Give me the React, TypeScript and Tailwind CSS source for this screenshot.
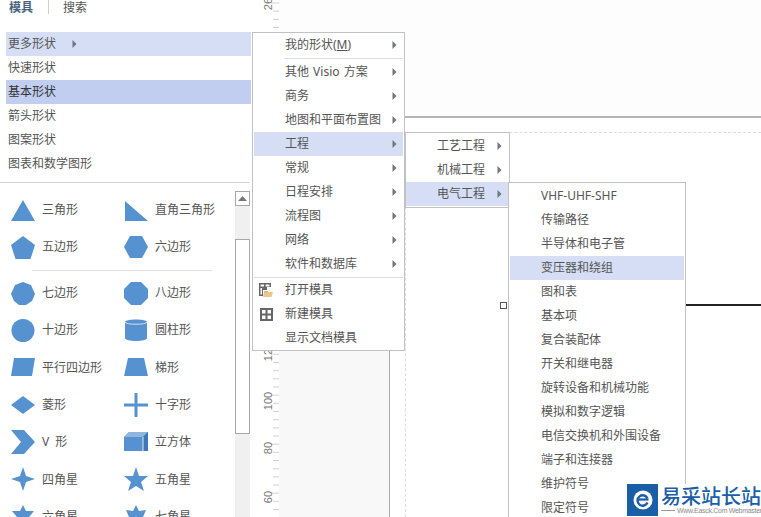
import React from "react";

const font = { fontFamily: '"Noto Sans", "Noto Sans CJK SC", "Liberation Sans", sans-serif' };

function Arrow({ className = "" }: { className?: string }) {
  return (
    <svg width="5" height="8" viewBox="0 0 5 8" className={className}>
      <path d="M0.5 0 L4.5 4 L0.5 8 Z" fill="#6f7680" />
    </svg>
  );
}

const B = "#5592cf";
const shapes: Record<string, React.ReactNode> = {
  tri: <polygon points="12,2 24,23 0,23" fill={B} />,
  rtri: <polygon points="1,3 24,23 1,23" fill={B} />,
  pent: <polygon points="12,1 24,10 19.5,24 4.5,24 0,10" fill={B} />,
  hex: <polygon points="6,1 18,1 24,12 18,23 6,23 0,12" fill={B} />,
  hept: <polygon points="12,1 20,4 24,13 21,20 15,24 8,24 3,20 0,13 4,4" fill={B} />,
  oct: <polygon points="7,1 17,1 24,8 24,17 17,24 7,24 0,17 0,8" fill={B} />,
  dec: <circle cx="12" cy="12.5" r="11.5" fill={B} />,
  cyl: (
    <g>
      <path d="M1 4 C1 0.5 23 0.5 23 4 V20 C23 24 1 24 1 20 Z" fill={B} />
      <path d="M1 4 C1 7 23 7 23 4" fill="none" stroke="#cfe0f2" strokeWidth="1" />
    </g>
  ),
  para: <polygon points="3,3 24,3 21,21 0,21" fill={B} />,
  trap: <polygon points="4,3 20,3 24,21 0,21" fill={B} />,
  dia: <polygon points="12,3 24,12 12,21 0,12" fill={B} />,
  cross: <path d="M10.5 0 H13.5 V10.5 H24 V13.5 H13.5 V24 H10.5 V13.5 H0 V10.5 H10.5 Z" fill={B} />,
  chev: <polygon points="0,0 13,0 24,12 13,24 0,24 10,12" fill={B} />,
  cube: (
    <g>
      <polygon points="0,7 5,2 24,2 24,21 19,21 0,21" fill={B} />
      <polygon points="0,7 5,2 24,2 19,7" fill="#8fb6de" />
      <polygon points="19,7 24,2 24,21 19,21" fill="#3f78b4" />
      <line x1="19" y1="7" x2="19" y2="21" stroke="#dbe8f5" />
    </g>
  ),
  s4: <polygon points="12,0 15,9 24,12 15,15 12,24 9,15 0,12 9,9" fill={B} />,
  s5: <polygon points="12,0 15,9 24,9 17,15 20,24 12,19 4,24 7,15 0,9 9,9" fill={B} />,
  s6: <polygon points="12,0 15,6 23,6 18,12 23,18 15,18 12,24 9,18 1,18 6,12 1,6 9,6" fill={B} />,
  s7: <polygon points="12,0 15,6 22,5 19,12 24,17 16,18 12,24 8,18 0,17 5,12 2,5 9,6" fill={B} />,
};

const shapeRows: { h: string; items: [string, string][] }[] = [
  { h: "h-[37px]", items: [["tri", "三角形"], ["rtri", "直角三角形"]] },
  { h: "h-[37px]", items: [["pent", "五边形"], ["hex", "六边形"]] },
  { h: "h-[46px] pt-[9px]", items: [["hept", "七边形"], ["oct", "八边形"]] },
  { h: "h-[37px]", items: [["dec", "十边形"], ["cyl", "圆柱形"]] },
  { h: "h-[38px]", items: [["para", "平行四边形"], ["trap", "梯形"]] },
  { h: "h-[37px]", items: [["dia", "菱形"], ["cross", "十字形"]] },
  { h: "h-[37px]", items: [["chev", "V 形"], ["cube", "立方体"]] },
  { h: "h-[38px]", items: [["s4", "四角星"], ["s5", "五角星"]] },
  { h: "h-[37px]", items: [["s6", "六角星"], ["s7", "七角星"]] },
];

const listRows = [
  { t: "更多形状", cls: "bg-[#d5def5]", arrow: true },
  { t: "快速形状", cls: "" },
  { t: "基本形状", cls: "bg-[#c1cef0] text-[#333333]" },
  { t: "箭头形状", cls: "" },
  { t: "图案形状", cls: "" },
  { t: "图表和数学图形", cls: "" },
];

function Ruler() {
  const ticks: number[] = [];
  for (let y = 3; y < 517; y += 8.17) ticks.push(y);
  const labels: [string, number][] = [
    ["260", 1],
    ["120", 352],
    ["100", 401],
    ["80", 448],
    ["60", 497],
  ];
  return (
    <svg width="27" height="517" viewBox="0 0 27 517" className="shrink-0">
      {ticks.map((y, i) => (
        <line key={i} x1={i % 6 === 0 ? 19 : 21} x2="27" y1={y} y2={y} stroke="#d2d2d2" strokeWidth="1" />
      ))}
      {labels.map(([t, y]) => (
        <text
          key={t}
          x="0"
          y="0"
          transform={`translate(20 ${y}) rotate(-90)`}
          textAnchor="middle"
          fontSize="11"
          fill="#777777"
          fontFamily="Liberation Sans, sans-serif"
        >
          {t}
        </text>
      ))}
    </svg>
  );
}

const mainMenuTop = ["其他 Visio 方案", "商务", "地图和平面布置图", "工程", "常规", "日程安排", "流程图", "网络", "软件和数据库"];

const sub3 = [
  "VHF-UHF-SHF",
  "传输路径",
  "半导体和电子管",
  "变压器和绕组",
  "图和表",
  "基本项",
  "复合装配体",
  "开关和继电器",
  "旋转设备和机械功能",
  "模拟和数字逻辑",
  "电信交换机和外围设备",
  "端子和连接器",
  "维护符号",
  "限定符号",
];

function MenuRow({ text, active, children }: { text: React.ReactNode; active?: boolean; children?: React.ReactNode }) {
  return (
    <div className={`flex h-6 items-center pl-[31px] ${active ? "bg-[#d5def5]" : ""}`}>
      <span className="whitespace-pre [word-spacing:1px]">{text}</span>
      {children}
    </div>
  );
}

export default function App() {
  return (
    <div className="relative flex h-[517px] w-[761px] overflow-hidden bg-white text-[12px] leading-6 text-[#555555]" style={font}>
      {/* Stencil panel */}
      <div className="flex h-full w-[252px] shrink-0 flex-col bg-white">
        <div className="flex h-8 items-start">
          <div className="flex h-[14px] items-center leading-3">
            <span className="ml-[9px] mt-px font-bold text-[#46627f]">模具</span>
            <span className="ml-[15px] h-[14px] w-px bg-[#cfcfcf]" />
            <span className="ml-[14px] mt-px">搜索</span>
          </div>
        </div>
        <div className="ml-[6px] mr-px flex flex-col">
          {listRows.map((r) => (
            <div key={r.t} className={`flex h-6 items-center pl-[2px] ${r.cls}`}>
              <span>{r.t}</span>
              {r.arrow && <Arrow className="ml-4" />}
            </div>
          ))}
        </div>
        <div className="mt-[6px] h-px w-[250px] bg-[#d4d4d4]" />
        <div className="flex min-h-0 flex-1 pt-2">
          <div className="relative w-[235px] shrink-0 pl-[11px]">
            <div className="absolute left-8 top-[79px] h-px w-[180px] bg-[#e0e0e0]" />
            {shapeRows.map((row, i) => (
              <div key={i} className={`flex items-center ${row.h}`}>
                {row.items.map(([icon, label], j) => (
                  <div key={label} className={`flex items-center gap-[7px] ${j === 0 ? "w-[113px]" : ""}`}>
                    <svg width="24" height="24" viewBox="0 0 24 24" className="shrink-0">
                      {shapes[icon]}
                    </svg>
                    <span className="mt-px whitespace-pre [word-spacing:3px]">{label}</span>
                  </div>
                ))}
              </div>
            ))}
          </div>
          <div className="mt-0 flex h-[326px] w-[15px] shrink-0 flex-col bg-[#f0f0f0]">
            <div className="flex h-[15px] items-center justify-center border border-[#a8a8a8] bg-white">
              <svg width="9" height="5" viewBox="0 0 9 5">
                <path d="M0 5 L4.5 0 L9 5 Z" fill="#777777" />
              </svg>
            </div>
            <div className="mt-[33px] h-[195px] border border-[#a8a8a8] bg-white" />
          </div>
        </div>
      </div>

      {/* Ruler and drawing canvas */}
      <Ruler />
      <div className="flex min-w-0 flex-1 flex-col">
        <div className="h-[118px] shrink-0 border-b-2 border-[#b4b4b4] bg-[#fdfdfd]" />
        <div className="flex min-h-0 flex-1">
          <div className="w-[111px] shrink-0 border-r border-[#a9a9a9] bg-[#f8f8f8]" />
          <div className="w-[15px] shrink-0 bg-white" />
          <div className="mt-[14px] flex-1 border-l border-t border-dashed border-[#dddddd] bg-white" />
        </div>
      </div>

      {/* Connector on the canvas */}
      <div className="absolute left-[686px] top-[304px] h-[2px] w-[75px] bg-[#222222]" />
      <div className="absolute left-[500px] top-[302px] h-[7px] w-[7px] border border-[#555555] bg-white" />

      {/* Main menu */}
      <div className="absolute left-[252px] top-[32px] flex h-[319px] w-[153px] flex-col border border-[#c2c2c2] bg-white px-px">
        <MenuRow text={<>我的形状(<span className="underline">M</span>)</>}>
          <Arrow className="absolute left-[139px]" />
        </MenuRow>
        <div className="my-px ml-[30px] h-px bg-[#dedede]" />
        {mainMenuTop.map((t) => (
          <MenuRow key={t} text={t} active={t === "工程"}>
            <Arrow className="absolute left-[139px]" />
          </MenuRow>
        ))}
        <div className="my-px h-px bg-[#dedede]" />
        <MenuRow text="打开模具">
          <svg width="16" height="16" viewBox="0 0 16 16" className="absolute left-[5px]">
            <path d="M1 1 H13 V5 H9 V8 H5 V14 H1 Z M2.5 2.5 V4.5 H6 V2.5 Z M7.5 2.5 V4.5 H11.5 V2.5 Z M2.5 6 V12.5 H4 V6 Z" fill="#666666" fillRule="evenodd" />
            <path d="M6 10 H15 L13.5 15 H5 Z" fill="#e8c98c" />
            <path d="M6 9 H10 V10.5 H6 Z" fill="#d9b878" />
          </svg>
        </MenuRow>
        <MenuRow text="新建模具">
          <svg width="13" height="13" viewBox="0 0 13 13" className="absolute left-[7px]">
            <path d="M0 0 H13 V13 H0 Z M2 2 V5.5 H5.5 V2 Z M7.5 2 V5.5 H11 V2 Z M2 7.5 V11 H5.5 V7.5 Z M7.5 7.5 V11 H11 V7.5 Z" fill="#666666" fillRule="evenodd" />
          </svg>
        </MenuRow>
        <MenuRow text="显示文档模具" />
      </div>

      {/* Second menu */}
      <div className="absolute left-[405px] top-[132px] flex w-[105px] flex-col border border-[#c2c2c2] bg-white py-px pr-px">
        {["工艺工程", "机械工程", "电气工程"].map((t) => (
          <div key={t} className={`flex h-6 items-center pl-[31px] ${t === "电气工程" ? "bg-[#d5def5]" : ""}`}>
            <span>{t}</span>
            <Arrow className="ml-[12px]" />
          </div>
        ))}
      </div>

      {/* Third menu */}
      <div className="absolute left-[508px] top-[182px] flex w-[178px] flex-col border border-[#c2c2c2] bg-white px-px pt-px pb-4">
        {sub3.map((t) => (
          <div key={t} className={`flex h-6 items-center pl-[31px] ${t === "变压器和绕组" ? "bg-[#d5def5]" : ""}`}>
            <span>{t}</span>
          </div>
        ))}
      </div>

      {/* Watermark */}
      <div className="absolute bottom-0 right-0 flex h-[33px] w-[134px] items-start overflow-hidden bg-white">
        <div className="flex h-[32px] w-[31px] shrink-0 items-center justify-center bg-[#1b5ea8]">
          <svg width="20" height="20" viewBox="0 0 20 20">
            <circle cx="10" cy="10" r="9.5" fill="#ffffff" />
            <path d="M14.5 8.5 A5.2 5.2 0 1 0 14.5 12.5" fill="none" stroke="#1b5ea8" strokeWidth="2.4" />
            <path d="M5 9.5 H15.5" stroke="#1b5ea8" strokeWidth="2.2" />
          </svg>
        </div>
        <div className="ml-[3px] flex min-w-0 flex-col">
          <span className="h-[22px] whitespace-nowrap text-[20px] font-medium leading-[26px] text-[#1b5ea8]">易采站长站</span>
          <div className="flex items-center gap-[2px]">
            <span className="h-px w-[14px] shrink-0 bg-[#9a9a9a]" />
            <span className="whitespace-nowrap text-[7px] leading-[9px] tracking-[-0.3px] text-[#8a8a8a]" style={{ fontFamily: '"Liberation Sans", sans-serif' }}>
              Www.Easck.Com Webmaster
            </span>
          </div>
        </div>
      </div>
    </div>
  );
}
